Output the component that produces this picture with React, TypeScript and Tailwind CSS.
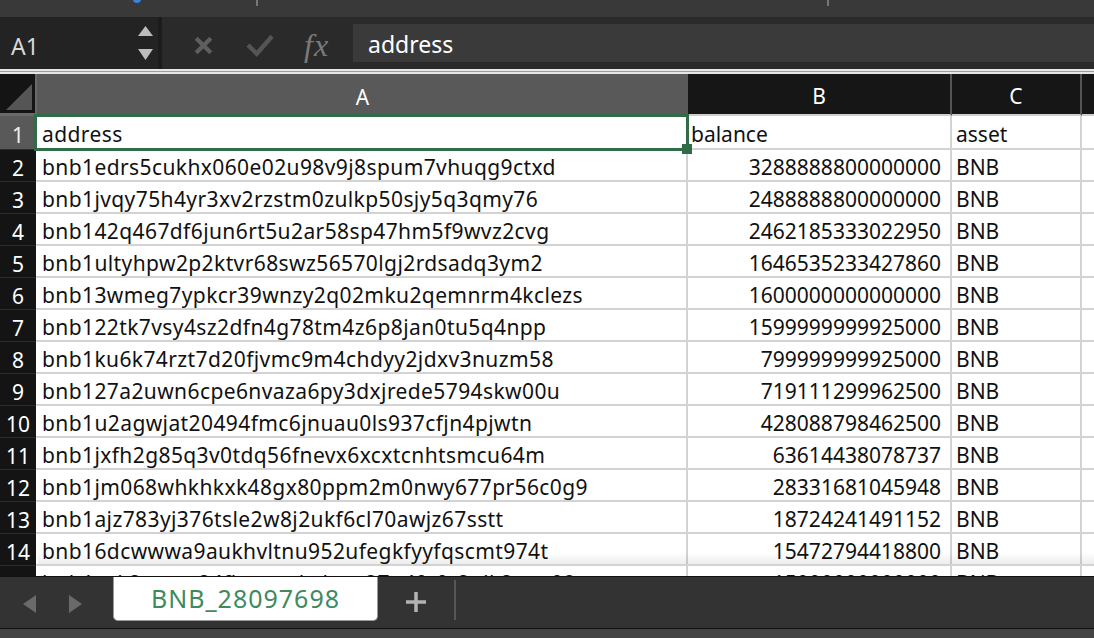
import React from 'react';

const rows: [string, string, string][] = [
  ['address', 'balance', 'asset'],
  ['bnb1edrs5cukhx060e02u98v9j8spum7vhuqg9ctxd', '3288888800000000', 'BNB'],
  ['bnb1jvqy75h4yr3xv2rzstm0zulkp50sjy5q3qmy76', '2488888800000000', 'BNB'],
  ['bnb142q467df6jun6rt5u2ar58sp47hm5f9wvz2cvg', '2462185333022950', 'BNB'],
  ['bnb1ultyhpw2p2ktvr68swz56570lgj2rdsadq3ym2', '1646535233427860', 'BNB'],
  ['bnb13wmeg7ypkcr39wnzy2q02mku2qemnrm4kclezs', '1600000000000000', 'BNB'],
  ['bnb122tk7vsy4sz2dfn4g78tm4z6p8jan0tu5q4npp', '1599999999925000', 'BNB'],
  ['bnb1ku6k74rzt7d20fjvmc9m4chdyy2jdxv3nuzm58', '799999999925000', 'BNB'],
  ['bnb127a2uwn6cpe6nvaza6py3dxjrede5794skw00u', '719111299962500', 'BNB'],
  ['bnb1u2agwjat20494fmc6jnuau0ls937cfjn4pjwtn', '428088798462500', 'BNB'],
  ['bnb1jxfh2g85q3v0tdq56fnevx6xcxtcnhtsmcu64m', '63614438078737', 'BNB'],
  ['bnb1jm068whkhkxk48gx80ppm2m0nwy677pr56c0g9', '28331681045948', 'BNB'],
  ['bnb1ajz783yj376tsle2w8j2ukf6cl70awjz67sstt', '18724241491152', 'BNB'],
  ['bnb16dcwwwa9aukhvltnu952ufegkfyyfqscmt974t', '15472794418800', 'BNB'],
  ['bnb1eyk2mmw24fkmwzrkahwe27n4fgfg2ulk2gvn08', '15000000000000', 'BNB'],
];

const font = { fontFamily: '"Noto Sans", "Liberation Sans", sans-serif' };

const FormulaBar = () => (
  <div className="flex h-[52px] bg-[#2a2a2a]">
    {/* Name box */}
    <div className="relative flex w-[158px] items-center bg-[#232323] pl-[11px] pt-[6px] text-[23px] text-[#d8d8d8]">
      A1
      <svg className="absolute left-[138px] top-[9px]" width="15" height="36" viewBox="0 0 15 36">
        <polygon points="7.5,0 15,10 0,10" fill="#bdbdbd" />
        <polygon points="0,23 15,23 7.5,34" fill="#bdbdbd" />
      </svg>
    </div>
    <div className="w-[4px] bg-[#1c1c1c]" />
    <div className="flex w-[191px] items-center pt-[4px]">
      <svg className="ml-[31px]" width="21" height="21" viewBox="0 0 20 20">
        <path d="M3 3 L17 17 M17 3 L3 17" stroke="#5e5e5e" strokeWidth="4" />
      </svg>
      <svg className="ml-[31px]" width="30" height="24" viewBox="0 0 26 22">
        <path d="M2 11 L10 19 L24 3" stroke="#555" strokeWidth="4" fill="none" />
      </svg>
      <span
        className="ml-[29px] text-[32px] italic leading-none tracking-[1px] text-[#7a7a7a]"
        style={{ fontFamily: '"Liberation Serif", "DejaVu Serif", serif' }}
      >
        fx
      </span>
    </div>
    <div className="flex flex-1 flex-col justify-center">
      <div className="flex h-[38px] items-center bg-[#3a3a3a] pl-[15px] pt-[2px] text-[23px] text-white">
        address
      </div>
    </div>
  </div>
);

const HeaderRow = () => (
  <div className="flex h-[42px] shrink-0">
    <div className="relative w-[37px] border-b-[3px] border-r-[2px] border-[#6a6a6a] bg-[#141414]">
      <svg className="absolute bottom-[3px] right-[3px]" width="26" height="26" viewBox="0 0 26 26">
        <polygon points="26,0 26,26 0,26" fill="#555" />
      </svg>
    </div>
    <div className="flex w-[651px] items-center justify-center bg-[#595959] pt-[6px] text-[21px] text-white">A</div>
    <div className="flex w-[264px] items-center justify-center border-b-[2px] border-r-[2px] border-b-[#cfcfcf] border-r-[#555] bg-[#161616] pt-[6px] text-[21px] text-white">
      B
    </div>
    <div className="flex w-[130px] items-center justify-center border-b-[2px] border-r-[2px] border-b-[#cfcfcf] border-r-[#555] bg-[#161616] pt-[6px] text-[21px] text-white">
      C
    </div>
    <div className="flex-1 border-b-[2px] border-[#cfcfcf] bg-[#161616]" />
  </div>
);

const DataRow = ({ cells, index }: { cells: [string, string, string]; index: number }) => {
  const first = index === 0;
  const rowH = first ? 'h-[34px]' : 'h-[32px]';
  return (
    <div className={`flex shrink-0 ${rowH}`}>
      <div
        className={`flex w-[36px] items-center justify-center border-b border-[#2c2c2c] pt-[6px] text-[21px] ${
          first ? 'bg-[#595959] text-[#eeeeee]' : 'bg-[#141414] text-white'
        }`}
      >
        {index + 1}
      </div>
      <div className="flex w-[652px] items-center overflow-hidden whitespace-nowrap border-b-[2px] border-r-[2px] border-[#d3d3d3] bg-white pl-[6px] pt-[6px] text-[21px] tracking-[0.4px] text-[#111]">
        {cells[0]}
      </div>
      <div
        className={`flex w-[264px] items-center whitespace-nowrap border-b-[2px] border-r-[2px] border-[#d3d3d3] bg-white pt-[6px] text-[21px] text-[#111] ${
          first ? 'pl-[3px]' : 'justify-end pr-[9px]'
        }`}
      >
        {cells[1]}
      </div>
      <div className="flex w-[130px] items-center border-b-[2px] border-r-[2px] border-[#d3d3d3] bg-white pl-[4px] pt-[6px] text-[21px] text-[#111]">
        {cells[2]}
      </div>
      <div className="flex-1 border-b-[2px] border-[#d3d3d3] bg-white" />
    </div>
  );
};

const TabBar = () => (
  <div className="flex h-[52px] items-start border-t border-[#111] bg-[#333333]">
    <div className="flex h-full w-[113px] items-center pl-[23px] pt-[2px]">
      <svg width="14" height="18" viewBox="0 0 14 18">
        <polygon points="13,0 13,18 0,9" fill="#6a6a6a" />
      </svg>
      <svg className="ml-[31px]" width="14" height="18" viewBox="0 0 14 18">
        <polygon points="1,0 14,9 1,18" fill="#6a6a6a" />
      </svg>
    </div>
    <div className="flex h-[44px] w-[265px] items-center justify-center rounded-b-[5px] border-x border-b border-[#9a9a9a] bg-white text-[25px] tracking-[1px] text-[#3f8a5c]">
      BNB_28097698
    </div>
    <div className="flex h-full w-[76px] items-center justify-center pb-[2px]">
      <svg width="20" height="20" viewBox="0 0 20 20">
        <path d="M10 0 V20 M0 10 H20" stroke="#b3b3b3" strokeWidth="3.5" />
      </svg>
    </div>
    <div className="mt-[3px] h-[40px] w-[2px] bg-[#575757]" />
  </div>
);

export default function App() {
  return (
    <div className="flex h-[638px] w-[1094px] flex-col overflow-hidden bg-[#2a2a2a]" style={font}>
      {/* Ribbon edge */}
      <div className="relative h-[17px] shrink-0 bg-[#393939]">
        <div className="absolute left-[133px] top-[-5px] h-[8px] w-[8px] rounded-full bg-[#3b82e0]" />
        <div className="absolute left-[256px] top-0 h-[6px] w-[2px] bg-[#777]" />
        <div className="absolute left-[827px] top-0 h-[6px] w-[2px] bg-[#777]" />
      </div>

      <FormulaBar />

      <div className="h-[5px] shrink-0 border-y-[2px] border-[#e6e6e6] bg-[#9d9d9d]" />

      {/* Sheet */}
      <div className="relative flex min-h-0 flex-1 flex-col overflow-hidden bg-white">
        <HeaderRow />
        {rows.map((r, i) => (
          <DataRow key={i} cells={r} index={i} />
        ))}
        {/* selected cell A1 */}
        <div className="pointer-events-none absolute left-[34px] top-[40px] h-[37px] w-[655px] border-[3px] border-[#2f6c47]" />
        <div className="pointer-events-none absolute left-[682px] top-[70px] h-[10px] w-[10px] bg-[#2f6c47]" />
        {/* horizontal scroller shade */}
        <div className="pointer-events-none absolute left-[38px] right-0 top-[478px] h-[12px] bg-gradient-to-b from-transparent to-black/[0.07]" />
      </div>

      <TabBar />
      <div className="h-[10px] shrink-0 border-t border-[#111] bg-[#444444]" />
    </div>
  );
}
